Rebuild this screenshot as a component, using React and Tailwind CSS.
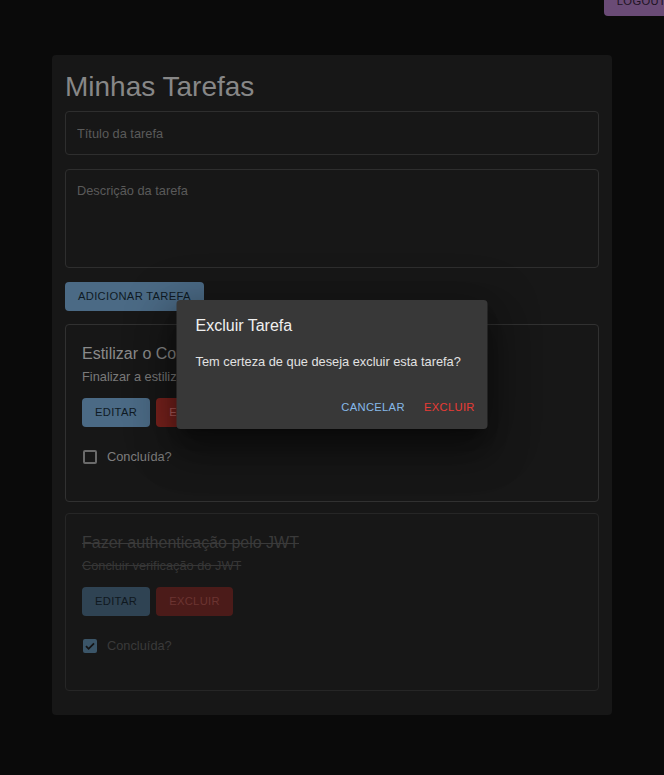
import React from "react";

const tasks = [
    { title: "Estilizar o Componente", description: "Finalizar a estilização do componente", done: false },
    { title: "Fazer authenticação pelo JWT", description: "Concluir verificação do JWT", done: true },
];

const TaskCard = ({ task }) => {
    const done = task.done;
    return (
        <div className={`mb-[11px] rounded-[4px] border px-[16px] pt-[16px] pb-[27px] ${done ? "border-[#262626]" : "border-[#313131]"}`}>
            <div className={`text-[16px] leading-[26px] ${done ? "text-[#3a3a3a] line-through" : "text-[#8a8a8a]"}`}>{task.title}</div>
            <div className={`text-[12.8px] leading-[19px] ${done ? "text-[#363636] line-through" : "text-[#7a7a7a]"}`}>{task.description}</div>
            <div className="mt-[12px] flex gap-[6px]">
                <button className={`h-[29px] rounded-[4px] px-[13px] text-[11.2px] font-medium uppercase tracking-[0.32px] ${done ? "bg-[#2f4353] text-[#0f1820]" : "bg-[#4b6a85] text-[#0f1a24]"}`}>Editar</button>
                <button className={`h-[29px] rounded-[4px] px-[13px] text-[11.2px] font-medium uppercase tracking-[0.32px] ${done ? "bg-[#4b1b19] text-[#6b3431]" : "bg-[#7a221d] text-[#b36060]"}`}>Excluir</button>
            </div>
            <div className="mt-[13px] flex h-[34px] items-center">
                {done ? (
                    <span className="ml-[1px] flex h-[14px] w-[14px] items-center justify-center rounded-[2px] bg-[#3b5568]">
                        <svg viewBox="0 0 14 14" className="h-[14px] w-[14px]" fill="none" stroke="#141414" strokeWidth="1.8">
                            <path d="M3 7.2l2.6 2.6L11 4.3" />
                        </svg>
                    </span>
                ) : (
                    <span className="ml-[1px] h-[14px] w-[14px] rounded-[2px] border-2 border-[#6a6a6a]" />
                )}
                <span className={`ml-[10px] text-[12.8px] ${done ? "text-[#3a3a3a]" : "text-[#7e7e7e]"}`}>Concluída?</span>
            </div>
        </div>
    );
}

const App = () => {
    return (
        <div className="relative min-h-screen w-full overflow-hidden bg-[#0a0a0a] font-['Liberation_Sans',Arial,sans-serif]">
            <div className="flex justify-end">
                <button className="-mt-[13px] -mr-[15px] h-[29px] rounded-[4px] bg-[#6a4b76] px-[13px] text-[11.2px] font-medium uppercase tracking-[0.32px] text-[#1c1222]">Logout</button>
            </div>

            <div className="mx-auto mt-[39px] w-[560px] rounded-[4px] bg-[#171717] px-[13px] pt-[15px] pb-[13px]">
                <h1 className="mb-[7px] text-[28px] leading-[34px] text-[#878787]">Minhas Tarefas</h1>
                <input
                    className="block h-[44px] w-full rounded-[4px] border border-[#2e2e2e] bg-transparent px-[11px] text-[12.8px] text-[#aaa] outline-none placeholder:text-[#5a5a5a]"
                    placeholder="Título da tarefa"
                />
                <textarea
                    className="mt-[14px] block h-[99px] w-full resize-none rounded-[4px] border border-[#2e2e2e] bg-transparent px-[11px] pt-[13px] text-[12.8px] leading-[15px] text-[#aaa] outline-none placeholder:text-[#5a5a5a]"
                    placeholder="Descrição da tarefa"
                />
                <button className="mt-[14px] h-[29px] rounded-[4px] bg-[#4b6a85] px-[13px] text-[11.2px] font-medium uppercase tracking-[0.32px] text-[#0f1a24]">Adicionar Tarefa</button>
                <div className="mt-[13px]">
                    {tasks.map((task, index) => <TaskCard key={index} task={task} />)}
                </div>
            </div>

            <div className="absolute left-1/2 top-[300px] w-[311px] -translate-x-1/2 rounded-[4px] bg-[#383838] shadow-[0_11px_15px_-7px_rgba(0,0,0,0.4),0_24px_38px_3px_rgba(0,0,0,0.3),0_9px_46px_8px_rgba(0,0,0,0.25)]">
                <div className="px-[19px] pt-[13px] text-[16px] leading-[26px] text-[#f0f0f0]">Excluir Tarefa</div>
                <div className="px-[19px] pt-[13px] pb-[16px] text-[12.8px] leading-[19px] text-[#e2e2e2]">Tem certeza de que deseja excluir esta tarefa?</div>
                <div className="flex justify-end gap-[6.4px] p-[6.4px]">
                    <button className="h-[29px] rounded-[4px] px-[6.4px] text-[11.2px] font-medium uppercase tracking-[0.32px] text-[#86b8e8]">Cancelar</button>
                    <button className="h-[29px] rounded-[4px] px-[6.4px] text-[11.2px] font-medium uppercase tracking-[0.32px] text-[#e83b35]">Excluir</button>
                </div>
            </div>
        </div>
    );
}

export default App;
